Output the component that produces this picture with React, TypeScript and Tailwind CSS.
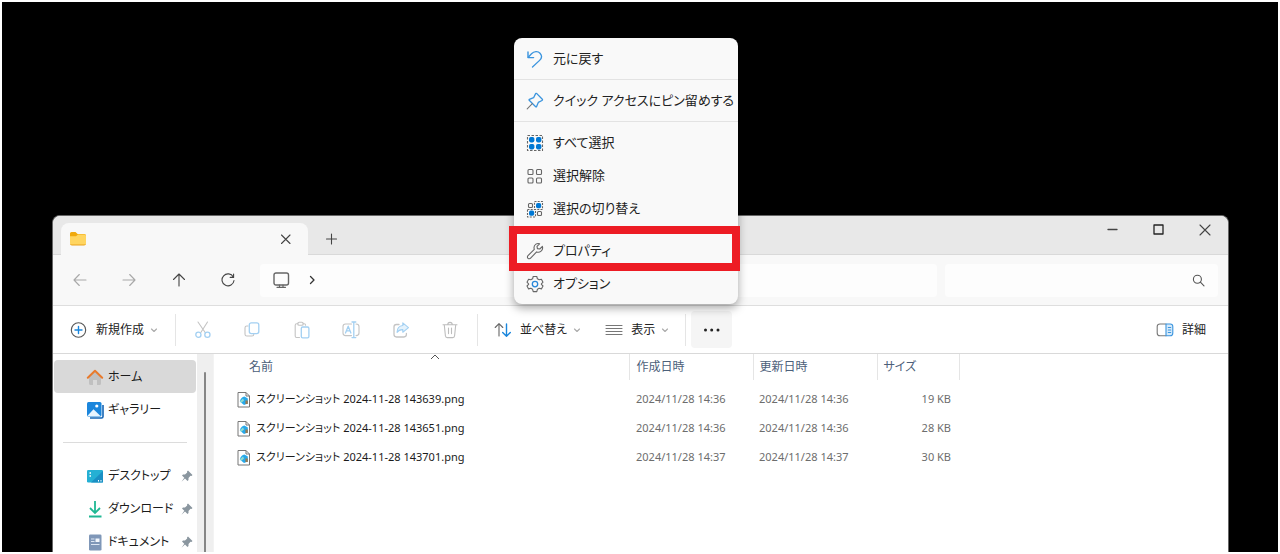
import React from 'react';

type IconProps = {
  w?: number;
  h?: number;
  color?: string;
  children: React.ReactNode;
};

const BLUE = '#1a86dc';

const Icon = ({w = 18, h = 18, color = '#444', children}: IconProps) => (
  <svg
    width={w}
    height={h}
    viewBox={`0 0 ${w} ${h}`}
    fill="none"
    stroke={color}
    strokeWidth={1.1}
    strokeLinecap="round"
    strokeLinejoin="round"
    className="shrink-0"
    aria-hidden="true">
    {children}
  </svg>
);

const ChevronDown = () => (
  <Icon w={8} h={8} color="#aaa">
    <path d="M1.5 3 L4 5.5 L6.5 3" />
  </Icon>
);

/* ---------- context menu ---------- */

const UndoIcon = () => (
  <Icon color="#3a94de">
    <path d="M2 2 V7.6 H7.6" strokeWidth="1.4" />
    <path d="M2.3 7.2 L5.5 3.8 C8 1.2 12 1 14 3.2 C16 5.4 15.8 8.3 13.6 10.4 L6.5 17" strokeWidth="1.3" />
  </Icon>
);

const PinOutlineIcon = () => (
  <Icon color="#3a94de">
    <path d="M10.8 1.6 L16.3 7.2 C16.7 7.7 16.6 8.2 16 8.5 L12.3 10.4 L10.6 14.6 C10.4 15 10 15 9.7 14.7 L3.2 8.3 C2.9 8 3 7.6 3.4 7.4 L7.6 5.7 L9.5 1.9 C9.8 1.3 10.3 1.2 10.8 1.6 Z" strokeWidth="1.3" />
    <path d="M6.3 11.6 L1.2 16.8" stroke="#777" />
  </Icon>
);

const SelectAllIcon = () => (
  <Icon color="#666">
    <rect x="1.5" y="1.5" width="15" height="15" strokeDasharray="2.5 1.5" strokeLinecap="butt" />
    <g fill="#0078d4" stroke="none">
      <rect x="3" y="3" width="5.4" height="5.4" rx="1.8" />
      <rect x="10" y="3" width="5.4" height="5.4" rx="1.8" />
      <rect x="3" y="10" width="5.4" height="5.4" rx="1.8" />
      <rect x="10" y="10" width="5.4" height="5.4" rx="1.8" />
    </g>
  </Icon>
);

const SelectNoneIcon = () => (
  <Icon color="#666">
    <rect x="2" y="2.5" width="5" height="5" rx="1" />
    <rect x="10.5" y="2.5" width="5" height="5" rx="1" />
    <rect x="2" y="11" width="5" height="5" rx="1" />
    <rect x="10.5" y="11" width="5" height="5" rx="1" />
  </Icon>
);

const InvertIcon = () => (
  <Icon color="#666">
    <rect x="2.5" y="3.5" width="4" height="4" rx="1" />
    <rect x="11.5" y="11.5" width="4" height="4" rx="1" />
    <rect x="8.5" y="1.5" width="8" height="8" strokeDasharray="2 1.2" strokeLinecap="butt" />
    <rect x="1.5" y="9.5" width="8" height="7.5" strokeDasharray="2 1.2" strokeLinecap="butt" />
    <rect x="10" y="3" width="5.2" height="5.2" rx="1.8" fill="#0078d4" stroke="none" />
    <rect x="3" y="10.6" width="5.2" height="5.2" rx="1.8" fill="#0078d4" stroke="none" />
  </Icon>
);

const WrenchIcon = () => (
  <Icon color="#666">
    <path d="M13.6 1.8 C11.2 0.8 8 2.4 8 5.6 C8 6.3 8.1 6.9 8.3 7.4 L2 13.6 C1.2 14.4 1.2 15.6 2 16.3 C2.8 17 3.9 17 4.6 16.2 L10.6 9.9 C13.6 11 17.6 8.6 16.4 4.4 L13.8 7 L11.4 6.6 L11 4.3 Z" />
  </Icon>
);

const GearIcon = () => (
  <Icon color="#666">
    <path d="M7.2 1.5 H10.8 L11.4 3.8 L13.2 4.8 L15.4 4.2 L17 7.2 L15.4 8.8 V9.4 L17 11 L15.4 13.9 L13.2 13.3 L11.4 14.3 L10.8 16.6 H7.2 L6.6 14.3 L4.8 13.3 L2.6 13.9 L1 11 L2.6 9.4 V8.8 L1 7.2 L2.6 4.2 L4.8 4.8 L6.6 3.8 Z" />
    <circle cx="9" cy="9.1" r="2.7" stroke="#2b88d8" strokeWidth="1.3" />
  </Icon>
);

const menuGroups = [
  [{label: '元に戻す', icon: <UndoIcon />}],
  [{label: 'クイック アクセスにピン留めする', icon: <PinOutlineIcon />}],
  [
    {label: 'すべて選択', icon: <SelectAllIcon />},
    {label: '選択解除', icon: <SelectNoneIcon />},
    {label: '選択の切り替え', icon: <InvertIcon />},
  ],
  [
    {label: 'プロパティ', icon: <WrenchIcon />, marked: true},
    {label: 'オプション', icon: <GearIcon />},
  ],
] as {label: string; icon: React.ReactNode; marked?: boolean}[][];

const MoreMenu = () => (
  <div
    role="menu"
    className="absolute left-[512px] top-9 z-20 w-56 rounded-lg bg-[#f9f9f9] py-1 shadow-[0_4px_10px_rgba(0,0,0,0.35)]">
    {menuGroups.map((group, index) => (
      <React.Fragment key={index}>
        {index > 0 ? <div role="separator" className="my-1 h-px bg-[#e3e3e3]" /> : null}
        {group.map(item => (
          <div key={item.label} className="relative">
            <button
              type="button"
              role="menuitem"
              className="flex h-[33px] w-full items-center gap-[9px] whitespace-nowrap pl-3 text-left text-[13px] text-[#222]">
              {item.icon}
              <span>{item.label}</span>
            </button>
            {item.marked ? (
              <div className="pointer-events-none absolute -bottom-1 -left-[5px] -right-0.5 -top-2 border-8 border-[#ed1c24]" />
            ) : null}
          </div>
        ))}
      </React.Fragment>
    ))}
  </div>
);

/* ---------- title bar and navigation ---------- */

const TitleBar = () => (
  <div className="flex h-[39px] border-b border-[#d9d9d9] bg-[#e8e8e8]">
    <div className="-mb-px ml-2 mt-[7px] flex w-[247px] items-center justify-between rounded-t-lg bg-[#f8f8f8] pl-2 pr-[17px]">
      <svg width="18" height="16" viewBox="0 0 18 16" aria-hidden="true">
        <path d="M1 2.5 Q1 1 2.5 1 H6.5 L8.6 3 H15.5 Q17 3 17 4.5 V8 H1 Z" fill="#f0a90d" />
        <path d="M1 5.2 H7 L9 3.6 H15.8 Q17 3.8 17 5 V12.5 Q17 14 15.5 14 H2.5 Q1 14 1 12.5 Z" fill="#ffd560" />
        <path d="M1 12.4 Q1 14.5 3 14.5 H15 Q17 14.5 17 12.4 Q17 13.5 15.3 13.5 H2.7 Q1 13.5 1 12.4 Z" fill="#e9a21a" />
      </svg>
      <button type="button" aria-label="タブを閉じる">
        <Icon w={11} h={11}>
          <path d="M1.5 1 L10 9.5 M10 1 L1.5 9.5" />
        </Icon>
      </button>
    </div>
    <button type="button" aria-label="新しいタブ" className="ml-[17px] pt-2">
      <Icon w={12} h={12}>
        <path d="M6.5 1 V11 M1.5 6 H11.5" />
      </Icon>
    </button>
    <div className="ml-auto flex h-7">
      <button type="button" aria-label="最小化" className="flex w-[46px] items-center justify-center">
        <Icon w={12} h={12}>
          <path d="M1 5.5 H10" strokeWidth="1.3" />
        </Icon>
      </button>
      <button type="button" aria-label="最大化" className="flex w-[46px] items-center justify-center">
        <Icon w={12} h={12} color="#222">
          <rect x="1" y="1" width="9" height="9" strokeWidth="1.3" />
        </Icon>
      </button>
      <button type="button" aria-label="閉じる" className="flex w-[46px] items-center justify-center">
        <Icon w={12} h={12}>
          <path d="M1 1 L11 11 M11 1 L1 11" />
        </Icon>
      </button>
    </div>
  </div>
);

const NavBar = () => (
  <div className="flex h-[51px] items-center border-b border-[#dedede] bg-[#f8f8f8] pl-0.5 pr-[10px]">
    <div className="grid w-[198px] shrink-0 grid-cols-4 place-items-center">
      <button type="button" aria-label="戻る">
        <Icon w={14} h={14} color="#a8a8a8">
          <path d="M13 7 H1 M6.3 1.5 L1 7 L6.3 12.5" />
        </Icon>
      </button>
      <button type="button" aria-label="進む">
        <Icon w={14} h={14} color="#a8a8a8">
          <path d="M1 7 H13 M7.7 1.5 L13 7 L7.7 12.5" />
        </Icon>
      </button>
      <button type="button" aria-label="上へ">
        <Icon w={14} h={14}>
          <path d="M7 13 V1 M1.5 6.5 L7 1 L12.5 6.5" />
        </Icon>
      </button>
      <button type="button" aria-label="更新">
        <Icon w={14} h={14}>
          <path d="M12.3 4 A6 6 0 1 0 13 7.5 M12.6 1 V4.4 H9.2" />
        </Icon>
      </button>
    </div>
    <div className="ml-[7px] flex h-[33px] flex-1 items-center gap-[18px] rounded bg-[#fdfdfd] pl-[13px]">
      <Icon w={17} h={17} color="#666">
        <rect x="1" y="1" width="14.500" height="12" rx="2" strokeWidth="1.4" />
        <path d="M6.5 13 V15.3 M10 13 V15.3 M4 15.3 H12.5" strokeWidth="1.2" />
      </Icon>
      <Icon w={8} h={10} color="#333">
        <path d="M2.5 1.5 L6 5 L2.5 8.5" strokeWidth="1.3" />
      </Icon>
    </div>
    <label className="ml-2 flex h-[33px] w-[273px] items-center rounded bg-[#fdfdfd] pl-3 pr-[13px]">
      <input type="text" aria-label="検索" className="min-w-0 flex-1 bg-transparent text-xs outline-none" />
      <Icon w={13} h={13} color="#555">
        <circle cx="5.4" cy="5.2" r="4" />
        <path d="M8.4 8.2 L12 11.8" />
      </Icon>
    </label>
  </div>
);

/* ---------- command bar ---------- */

const disabledTools = [
  {
    label: '切り取り',
    icon: (
      <Icon color="#c4c4c4">
        <path d="M4 1 L11.5 12 M13.5 1 L6.5 12" />
        <circle cx="4.4" cy="13.8" r="2.6" stroke="#a3d0f2" strokeWidth="1.3" />
        <circle cx="13.4" cy="13.8" r="2.6" stroke="#a3d0f2" strokeWidth="1.3" />
      </Icon>
    ),
  },
  {
    label: 'コピー',
    icon: (
      <Icon color="#c4c4c4">
        <path d="M5 5 H3.8 Q2 5 2 6.8 V13.2 Q2 15 3.8 15 H9 Q10.8 15 10.8 13.2" />
        <rect x="6.3" y="1.8" width="9.5" height="10.8" rx="2" stroke="#a3d0f2" strokeWidth="1.3" />
      </Icon>
    ),
  },
  {
    label: '貼り付け',
    icon: (
      <Icon color="#c4c4c4">
        <path d="M5 2.8 H3.6 Q2.2 2.8 2.2 4.2 V15 Q2.2 16.5 3.6 16.5 H6.5 M10 2.8 H11.2 Q12.6 2.8 12.6 4.2" />
        <rect x="4.8" y="1.2" width="5.4" height="3" rx="1.3" />
        <rect x="8.3" y="6" width="7.6" height="10.8" rx="1.4" stroke="#a3d0f2" strokeWidth="1.3" />
      </Icon>
    ),
  },
  {
    label: '名前の変更',
    icon: (
      <Icon color="#c4c4c4">
        <path d="M9.5 3 H3.6 Q1 3 1 5.6 V12 Q1 14.6 3.6 14.6 H9.5 M14 3 Q17 3 17 5.6 V12 Q17 14.6 14 14.6" />
        <path d="M3.5 12 L6.2 5.2 L8.9 12 M4.4 9.8 H8 M11.8 1 V16.6 M10 1 H13.8 M10 16.6 H13.8" stroke="#a3d0f2" strokeWidth="1.3" />
      </Icon>
    ),
  },
  {
    label: '共有',
    icon: (
      <Icon color="#c4c4c4">
        <path d="M7 3.5 H4.4 Q2 3.5 2 5.8 V13.6 Q2 16 4.4 16 H12 Q14.4 16 14.4 13.6 V12.5" strokeWidth="1.3" />
        <path d="M10.8 1.8 L16.5 6.6 L10.8 11.2 V8.6 Q7 8.4 5 11.4 Q5.2 5 10.8 4.5 Z" stroke="#a3d0f2" fill="#e4f2fc" />
      </Icon>
    ),
  },
  {
    label: '削除',
    icon: (
      <Icon color="#bdbdbd">
        <path d="M2 3.8 H16 M6.8 3.5 Q6.8 1.4 9 1.4 Q11.2 1.4 11.2 3.5 M3.3 4 L4.4 14.8 Q4.6 16.6 6.2 16.6 H11.8 Q13.4 16.6 13.6 14.8 L14.7 4 M7.5 7 V12.6 M10.5 7 V12.6" />
      </Icon>
    ),
  },
];

const Divider = () => <div className="h-8 w-px shrink-0 bg-[#e5e5e5]" />;

const CommandBar = () => (
  <div className="flex h-12 items-center border-b border-[#d9d9d9] bg-white pl-[17px] pr-[22px] text-xs text-[#222]">
    <button type="button" className="mr-[17px] flex items-center gap-2">
      <Icon color="#555">
        <circle cx="8.5" cy="9" r="7.2" />
        <path d="M8.5 5.5 V12.5 M5 9 H12" stroke={BLUE} strokeWidth="1.4" />
      </Icon>
      <span className="flex items-center gap-1.5">
        新規作成
        <ChevronDown />
      </span>
    </button>
    <Divider />
    <div className="mx-0.5 grid w-[297px] shrink-0 grid-cols-6 place-items-center">
      {disabledTools.map(tool => (
        <button key={tool.label} type="button" aria-label={tool.label} disabled>
          {tool.icon}
        </button>
      ))}
    </div>
    <Divider />
    <button type="button" className="ml-4 flex items-center gap-2">
      <Icon color="#666">
        <path d="M5 15 V3 M1.2 6.5 L5 2.6 L8.8 6.5" />
        <path d="M12.5 3 V15 M8.7 11.5 L12.5 15.3 L16.3 11.5" stroke={BLUE} strokeWidth="1.4" />
      </Icon>
      <span className="flex items-center gap-1.5">
        並べ替え
        <ChevronDown />
      </span>
    </button>
    <button type="button" className="ml-6 mr-4 flex items-center gap-2">
      <Icon color="#777">
        <path d="M1 4.500 H17 M1 7.500 H17 M1 10.500 H17 M1 13.500 H17" />
      </Icon>
      <span className="flex items-center gap-1.5">
        表示
        <ChevronDown />
      </span>
    </button>
    <Divider />
    <button
      type="button"
      aria-label="もっと見る"
      className="ml-[5px] flex h-[37px] w-[41px] items-center justify-center rounded bg-[#f5f5f5]">
      <svg width="18" height="4" viewBox="0 0 18 4" fill="#222" aria-hidden="true">
        <circle cx="2.5" cy="2" r="1.5" />
        <circle cx="8.7" cy="2" r="1.5" />
        <circle cx="15" cy="2" r="1.5" />
      </svg>
    </button>
    <button type="button" className="ml-auto flex items-center gap-2">
      <Icon color="#777">
        <path d="M10 3 H4 Q1.2 3 1.2 5.6 V12 Q1.2 14.8 4 14.8 H10" />
        <path d="M10 3 H14.2 Q16.8 3 16.8 5.6 V12 Q16.8 14.8 14.2 14.8 H10 Z" stroke="#3a94de" fill="#d6eafa" />
        <path d="M12.3 6.5 H14.7 M12.3 9 H14.7 M12.3 11.5 H14.7" stroke="#3a94de" />
      </Icon>
      <span>詳細</span>
    </button>
  </div>
);

/* ---------- sidebar ---------- */

const HomeIcon = () => (
  <svg width="18" height="18" viewBox="0 0 18 18" aria-hidden="true">
    <path d="M3 8 L9 3 L15 8 V15.5 Q15 17 13.5 17 H11 V12 H7 V17 H4.5 Q3 17 3 15.5 Z" fill="#c0c0c0" />
    <path d="M1.8 9.8 L9 2.8 L16.2 9.8" fill="none" stroke="#e87a2c" strokeWidth="2" strokeLinecap="round" strokeLinejoin="round" />
  </svg>
);

const GalleryIcon = () => (
  <svg width="18" height="18" viewBox="0 0 18 18" aria-hidden="true">
    <path d="M4 17 H15.5 Q17 17 17 15.5 V4" fill="none" stroke="#1565b5" strokeWidth="1.6" />
    <rect x="1" y="1" width="14.5" height="14.5" rx="1.5" fill="#1b86dc" />
    <path d="M1.5 14.8 L7.5 8.3 L14.5 15 H2.5 Z" fill="#e8f5ff" />
    <circle cx="10.8" cy="5" r="1.6" fill="#fff" />
  </svg>
);

const DesktopIcon = () => (
  <svg width="18" height="18" viewBox="0 0 18 18" aria-hidden="true">
    <rect x="1" y="3" width="16" height="12.5" rx="1.3" fill="#25b0d4" />
    <path d="M17 4 V15.5 H5 Z" fill="#1a8fc4" />
    <path d="M3.5 6 H5 M3.5 9 H5 M12 13.8 H13 M14.5 13.8 H15.5" stroke="#fff" strokeWidth="1.5" />
  </svg>
);

const DownloadIcon = () => (
  <svg width="18" height="18" viewBox="0 0 18 18" fill="none" stroke="#1fb893" strokeWidth="1.8" aria-hidden="true">
    <path d="M9 1 V12.5 M4 8 L9 13 L14 8 M3 16.5 H15.5" />
  </svg>
);

const DocumentIcon = () => (
  <svg width="18" height="18" viewBox="0 0 18 18" aria-hidden="true">
    <rect x="3" y="1.5" width="12.5" height="16" rx="1.3" fill="#7f97b8" />
    <path d="M5 6 H8.5 M5 8.5 H8.5 M5 11.5 H13.5" stroke="#dce6f3" />
    <rect x="9.5" y="5.5" width="4" height="3.5" fill="#f2f7fd" />
  </svg>
);

const PinIcon = () => (
  <svg width="12" height="12" viewBox="0 0 12 12" className="ml-auto" aria-hidden="true">
    <path d="M7 0.5 L11.5 5 L10.5 6 L9.5 5.8 L7.5 8 V10 L6.5 11 L4 8.5 L0.5 11.8 L3.3 7.8 L1 5.5 L2 4.5 H4 L6.2 2.5 L6 1.5 Z" fill="#8a969f" />
  </svg>
);

const places = [
  {label: 'ホーム', icon: <HomeIcon />, active: true},
  {label: 'ギャラリー', icon: <GalleryIcon />},
];

const pinned = [
  {label: 'デスクトップ', icon: <DesktopIcon />},
  {label: 'ダウンロード', icon: <DownloadIcon />},
  {label: 'ドキュメント', icon: <DocumentIcon />},
];

const Sidebar = () => (
  <aside className="flex w-40 shrink-0 text-xs text-[#1b1b1b]">
    <nav className="min-w-0 flex-1 pt-1.5">
      {places.map(place => (
        <a
          key={place.label}
          href="#"
          className={`ml-px mr-px flex h-[33px] items-center gap-1 whitespace-nowrap rounded-sm pl-8 ${
            place.active ? 'bg-[#d9d9d9]' : ''
          }`}>
          {place.icon}
          <span>{place.label}</span>
        </a>
      ))}
      <hr className="mx-2.5 my-4 border-[#dcdcdc]" />
      {pinned.map(place => (
        <a key={place.label} href="#" className="ml-px mr-px flex h-[33px] items-center gap-1 whitespace-nowrap pl-8 pr-[3px]">
          {place.icon}
          <span>{place.label}</span>
          <PinIcon />
        </a>
      ))}
    </nav>
    <div className="flex w-4 shrink-0 justify-center bg-[#efefef] pt-[18px]">
      <div className="w-0.5 rounded-t bg-[#868686]" />
    </div>
  </aside>
);

/* ---------- file list ---------- */

const files = [
  {name: 'スクリーンショット 2024-11-28 143639.png', time: '2024/11/28 14:36', size: '19 KB'},
  {name: 'スクリーンショット 2024-11-28 143651.png', time: '2024/11/28 14:36', size: '28 KB'},
  {name: 'スクリーンショット 2024-11-28 143701.png', time: '2024/11/28 14:37', size: '30 KB'},
];

const PngIcon = () => (
  <svg width="14" height="18" viewBox="0 0 14 18" className="shrink-0" aria-hidden="true">
    <path d="M1 1.5 H9 L12.5 5 V16 H1 Z" fill="#fff" stroke="#777" />
    <path d="M9 1.5 V5 H12.5" fill="none" stroke="#777" />
    <path d="M2.8 10.5 Q4 6 7.5 5.5 L10.8 7.5 V12.5 L7 14 Z" fill="#27a8ea" />
    <path d="M2.8 10.5 L6 7.5 L7 9.5 L4.5 11.8 Z" fill="#8fdcd0" />
    <path d="M8.4 9.5 H10.8 V13 H8.4 Z" fill="#9a7b52" />
  </svg>
);

const FileList = () => (
  <div className="flex-1 border-l border-[#f3f3f3] text-[11px] text-[#6d6d6d]">
    <table className="w-full table-fixed border-collapse whitespace-nowrap">
      <colgroup>
        <col className="w-[415px]" />
        <col className="w-[124px]" />
        <col className="w-[124px]" />
        <col className="w-[82px]" />
        <col />
      </colgroup>
      <thead className="text-left text-xs text-[#4c607a]">
        <tr className="h-[26px]">
          <th className="relative border-r border-[#e5e5e5] pl-[35px] font-normal" aria-sort="ascending">
            名前
            <svg width="10" height="6" viewBox="0 0 10 6" fill="none" stroke="#555" className="absolute left-[216px] top-0" aria-hidden="true">
              <path d="M1 5 L5 1 L9 5" />
            </svg>
          </th>
          <th className="border-r border-[#e5e5e5] pl-[7px] font-normal">作成日時</th>
          <th className="border-r border-[#e5e5e5] pl-1.5 font-normal">更新日時</th>
          <th className="border-r border-[#e5e5e5] pl-1.5 font-normal">サイズ</th>
          <th />
        </tr>
      </thead>
      <tbody>
        <tr className="h-[5px]" aria-hidden="true" />
        {files.map(file => (
          <tr key={file.name} className="h-[29px]">
            <td className="pl-[23px] text-[#1b1b1b]">
              <div className="flex items-center gap-[5px]">
                <PngIcon />
                <span>{file.name}</span>
              </div>
            </td>
            <td className="pl-[7px]">{file.time}</td>
            <td className="pl-1.5">{file.time}</td>
            <td className="pr-2 text-right">{file.size}</td>
            <td />
          </tr>
        ))}
      </tbody>
    </table>
  </div>
);

const App = () => {
  return (
    <div className="relative flex h-screen flex-col overflow-hidden border-2 border-white bg-black pl-[50px] pr-[49px] pt-[213px] font-['Noto_Sans','Noto_Sans_CJK_JP',sans-serif] [font-feature-settings:'palt']">
      <MoreMenu />
      <main className="flex min-h-0 flex-1 flex-col overflow-hidden rounded-t-lg border border-b-0 border-[#666] bg-white">
        <TitleBar />
        <NavBar />
        <CommandBar />
        <div className="flex min-h-0 flex-1 overflow-hidden">
          <Sidebar />
          <FileList />
        </div>
      </main>
    </div>
  );
};

export default App;
